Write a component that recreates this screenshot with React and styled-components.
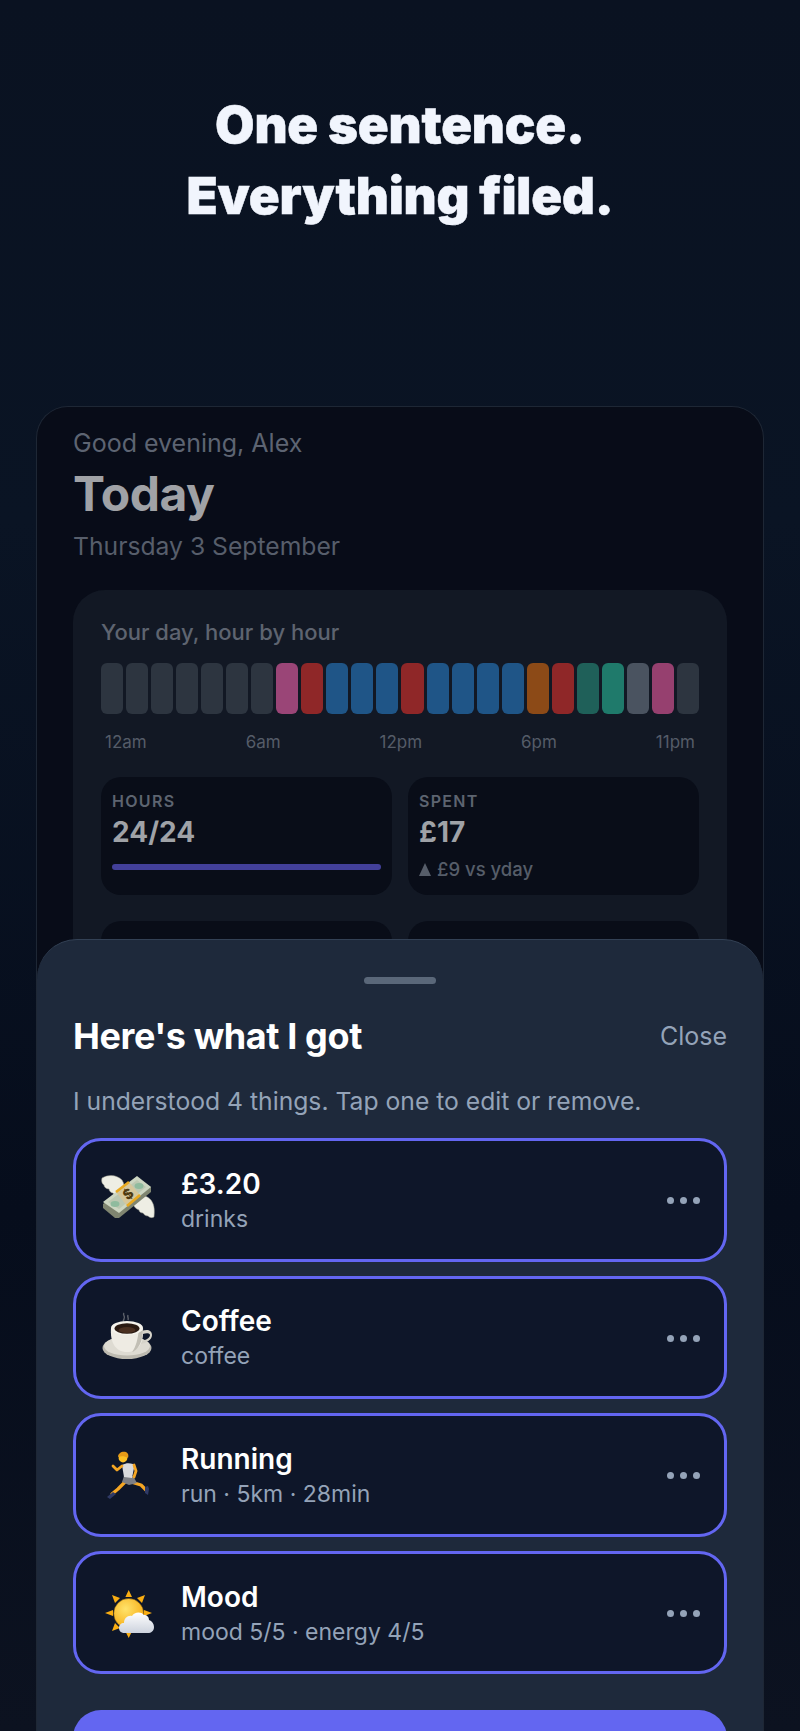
import React from "react";
import styled, { createGlobalStyle } from "styled-components";

const Global = createGlobalStyle`
  html, body { margin: 0; padding: 0; background: #070d1b; }
  * { box-sizing: border-box; }
  body { font-family: Inter, "Liberation Sans", sans-serif; }
`;

const HOURS = [
  "#2d3540", "#2d3540", "#2d3540", "#2d3540", "#2d3540", "#2d3540", "#2d3540",
  "#9a4577", "#8f2728", "#1f5587", "#1f5587", "#1f5587", "#8f2728", "#1f5587",
  "#1f5587", "#1f5587", "#1f5587", "#8c4a17", "#8f2728", "#1f6059", "#1f7a6b",
  "#4a5360", "#96406f", "#2d3540",
];

const HOUR_LABELS = ["12am", "6am", "12pm", "6pm", "11pm"];

function MoneyWings() {
  return (
    <svg width="54" height="54" viewBox="0 0 54 54">
      {/* wings */}
      <path d="M1 5c7-4 15-3 20 2 2 3 3 8 3 14l-6 4c-3-1-5-3-6-5-2 0-4-2-4-4-3 0-5-2-5-4-2-1-3-4-2-7z" fill="#eeeee4" stroke="#9d9d8e" strokeWidth=".5" />
      <path d="M53 44c1-8 0-14-4-18-3-3-9-5-14-4l-4 7c1 4 4 7 7 8 0 2 2 3 4 3 1 2 3 3 5 3 2 2 4 2 6 1z" fill="#eeeee4" stroke="#9d9d8e" strokeWidth=".5" />
      {/* bundle of notes */}
      <path d="M2 31 36 5l14 9 0 5-32 26-4 0-12-10z" fill="#7f8570" />
      <path d="M2 29 36 3l14 11-32 26z" fill="#cdd6c2" />
      <path d="m7 29 29-22 9 7-27 22z" fill="#bcc8b2" />
      <ellipse cx="38" cy="13" rx="4.500" ry="3" fill="#8fbb9e" />
      <ellipse cx="14" cy="31" rx="4.500" ry="3" fill="#8fbb9e" />
      {/* paper band */}
      <path d="m15 19 13-10 11 13-13 11z" fill="#d6c79c" />
      <path d="m15 19 13-10M26 33l13-11" stroke="#e8a91f" strokeWidth="2.600" fill="none" />
      <text x="27" y="26" fontSize="14" fontWeight="800" fill="#4f3a10" textAnchor="middle" transform="rotate(-38 27 21)">$</text>
    </svg>
  );
}

function CoffeeCup() {
  return (
    <svg width="54" height="54" viewBox="0 0 54 54">
      <path d="M23 3c-2 2 2 3 0 6s1 3 0 5M27 5c-1 2 1 3 0 5" stroke="#5f636c" strokeWidth="1.400" fill="none" />
      <ellipse cx="26" cy="38" rx="24.500" ry="11" fill="#bdbab0" />
      <ellipse cx="26" cy="36" rx="23" ry="9.500" fill="#dedbd2" />
      <path d="M41 21c5-2 10-1 10 4 0 5-6 8-11 9l1-3c4-1 8-3 8-6 0-2-4-2-7-1z" fill="#d6d3c9" />
      <path d="M10 18c-1 14 4 24 16 24s17-10 16-24z" fill="#eeebe3" />
      <path d="M31 42c6-2 11-10 11-24h-4c-1 11-3 19-7 24z" fill="#c2bfb5" />
      <ellipse cx="26" cy="18" rx="16" ry="7" fill="#f5f3ec" />
      <ellipse cx="26" cy="18.500" rx="12.500" ry="5.200" fill="#2a1a12" />
      <ellipse cx="26" cy="20" rx="8.500" ry="3" fill="#4a2f20" />
    </svg>
  );
}

function Runner() {
  return (
    <svg width="54" height="54" viewBox="0 0 54 54">
      {/* legs */}
      <path d="M24 34 17 41 11 46" stroke="#f5a623" strokeWidth="3.200" fill="none" strokeLinecap="round" strokeLinejoin="round" />
      <path d="M30 34 40 37 45 42" stroke="#f5a623" strokeWidth="3.200" fill="none" strokeLinecap="round" strokeLinejoin="round" />
      <path d="M6 49 12 44l3 2-6 5z" fill="#2f3a66" />
      <path d="m44 39 3-1 1 3-1 6-3-2z" fill="#2f3a66" />
      {/* shorts */}
      <path d="M23 28 32 28l4 7-8 2-7-3z" fill="#7d7f85" />
      {/* shirt */}
      <path d="M21 17c4-2 7-2 11-1l1 4-2 10-8-1-1-6z" fill="#d9dadd" />
      {/* arms */}
      <path d="M21 18 16 22 12 18" stroke="#f5a623" strokeWidth="2.800" fill="none" strokeLinecap="round" strokeLinejoin="round" />
      <path d="M33 17 35 23 33 29" stroke="#f5a623" strokeWidth="2.800" fill="none" strokeLinecap="round" strokeLinejoin="round" />
      <circle cx="22" cy="10" r="4.400" fill="#fbbf24" />
      <path d="M17 9c0-4 4-6 8-5 2 1 3 3 2 6-3-2-7-2-10-1z" fill="#e69a17" />
    </svg>
  );
}

function SunCloud() {
  return (
    <svg width="54" height="54" viewBox="0 0 54 54">
      <defs>
        <radialGradient id="sun" cx=".4" cy=".35" r=".75">
          <stop offset="0" stopColor="#ffe36b" />
          <stop offset="1" stopColor="#f7a70c" />
        </radialGradient>
        <linearGradient id="cloud" x1="0" y1="0" x2="0" y2="1">
          <stop offset="0" stopColor="#ffffff" />
          <stop offset="1" stopColor="#ccd2dd" />
        </linearGradient>
      </defs>
      <path d="M27.700 4 31 11h-6.600zM27.700 52 24.700 46h6zM4 27l8-3v6zM51 27l-8-3v6zM11 9l8 3-5 5zM44 9l-8 3 5 5zM11 45l3-8 5 5z" fill="#f9ad12" />
      <circle cx="27.700" cy="27.500" r="15" fill="url(#sun)" stroke="#6d4a06" strokeWidth=".5" />
      <path d="M24 47c-4 0-6-2-6-5s2-5 5-5c0-5 4-8 8-7 2-4 9-5 12-1 3 0 5 2 5 5 3 1 5 4 5 7 0 4-3 6-6 6z" fill="url(#cloud)" />
    </svg>
  );
}

const ITEMS = [
  { icon: <MoneyWings />, title: "£3.20", detail: "drinks" },
  { icon: <CoffeeCup />, title: "Coffee", detail: "coffee" },
  { icon: <Runner />, title: "Running", detail: "run · 5km · 28min" },
  { icon: <SunCloud />, title: "Mood", detail: "mood 5/5 · energy 4/5" },
];

export default function App() {
  return (
    <>
      <Global />
      <Page>
        <Headline>
          One sentence.
          <br />
          Everything filed.
        </Headline>
        <Card>
          <Greeting>Good evening, Alex</Greeting>
          <Today>Today</Today>
          <DateLine>Thursday 3 September</DateLine>
          <Panel>
            <PanelTitle>Your day, hour by hour</PanelTitle>
            <Bars>
              {HOURS.map((color, i) => (
                <Bar key={i} $color={color} />
              ))}
            </Bars>
            <HourLabels>
              {HOUR_LABELS.map((label) => (
                <span key={label}>{label}</span>
              ))}
            </HourLabels>
            <Stats>
              <Stat>
                <StatLabel>HOURS</StatLabel>
                <StatValue>24/24</StatValue>
                <Progress />
              </Stat>
              <Stat>
                <StatLabel>SPENT</StatLabel>
                <StatValue>£17</StatValue>
                <StatNote>
                  <Triangle />
                  £9 vs yday
                </StatNote>
              </Stat>
              <Stat />
              <Stat />
            </Stats>
          </Panel>
          <Sheet>
            <Handle />
            <SheetHead>
              <SheetTitle>Here's what I got</SheetTitle>
              <Close>Close</Close>
            </SheetHead>
            <SheetText>I understood 4 things. Tap one to edit or remove.</SheetText>
            <List>
              {ITEMS.map((item) => (
                <Item key={item.title}>
                  <Emoji>{item.icon}</Emoji>
                  <ItemBody>
                    <ItemTitle>{item.title}</ItemTitle>
                    <ItemDetail>{item.detail}</ItemDetail>
                  </ItemBody>
                  <Dots>
                    <i />
                    <i />
                    <i />
                  </Dots>
                </Item>
              ))}
            </List>
            <Confirm />
          </Sheet>
        </Card>
      </Page>
    </>
  );
}

const Page = styled.div`
  width: 800px;
  height: 1731px;
  overflow: hidden;
  display: flex;
  flex-direction: column;
  padding: 0 36px;
  background: linear-gradient(180deg, #0a1221 0%, #0a1424 30%, #060d1c 70%, #0c1220 100%);
`;

const Headline = styled.h1`
  margin: 0;
  height: 406px;
  padding-top: 89px;
  text-align: center;
  font-size: 51px;
  line-height: 71px;
  font-weight: 900;
  letter-spacing: -0.2px;
  color: #f1f5fd;
  -webkit-text-stroke: 0.5px #f1f5fd;
`;

const Card = styled.div`
  position: relative;
  flex: 1;
  overflow: hidden;
  padding: 21px 36px 0;
  border: 1px solid #1e2735;
  border-bottom: none;
  border-radius: 32px 32px 0 0;
  background: #080c18;
`;

const Greeting = styled.div`
  font-size: 25px;
  line-height: 30px;
  color: #5d6472;
`;

const Today = styled.div`
  margin-top: 7px;
  font-size: 48px;
  line-height: 58px;
  font-weight: 700;
  letter-spacing: -0.5px;
  color: #a0a2a6;
`;

const DateLine = styled.div`
  margin-top: 8px;
  font-size: 24.7px;
  line-height: 30px;
  color: #575e6b;
`;

const Panel = styled.div`
  margin-top: 29px;
  padding: 29px 28px 0;
  height: 420px;
  border-radius: 32px;
  background: #121824;
`;

const PanelTitle = styled.div`
  font-size: 22px;
  line-height: 26px;
  font-weight: 500;
  color: #5e6470;
`;

const Bars = styled.div`
  display: grid;
  grid-template-columns: repeat(24, 1fr);
  gap: 3px;
  margin-top: 18px;
`;

const Bar = styled.div`
  height: 51px;
  border-radius: 6px;
  background: ${(props) => props.$color};
`;

const HourLabels = styled.div`
  display: flex;
  justify-content: space-between;
  margin-top: 18px;
  padding: 0 4px;
  font-size: 17px;
  line-height: 20px;
  color: #555c68;
`;

const Stats = styled.div`
  display: grid;
  grid-template-columns: 1fr 1fr;
  gap: 26px 16px;
  margin-top: 25px;
`;

const Stat = styled.div`
  height: 118px;
  padding: 14px 11px 0;
  border-radius: 20px;
  background: #090d18;
`;

const StatLabel = styled.div`
  font-size: 16px;
  line-height: 20px;
  font-weight: 600;
  letter-spacing: 1.3px;
  color: #5d6470;
`;

const StatValue = styled.div`
  margin-top: 2px;
  font-size: 28px;
  line-height: 38px;
  font-weight: 700;
  color: #9fa2a7;
`;

const Progress = styled.div`
  height: 6px;
  margin-top: 13px;
  border-radius: 3px;
  background: #43409a;
`;

const StatNote = styled.div`
  display: flex;
  align-items: center;
  gap: 6px;
  margin-top: 7px;
  font-size: 18.5px;
  line-height: 22px;
  font-weight: 500;
  color: #565d69;
`;

const Triangle = styled.span`
  width: 0;
  height: 0;
  border-left: 6px solid transparent;
  border-right: 6px solid transparent;
  border-bottom: 13px solid #565d69;
`;

const Sheet = styled.div`
  position: absolute;
  left: 0;
  right: 0;
  bottom: 0;
  height: 792px;
  padding: 0 36px;
  border-top: 1px solid #334155;
  border-radius: 40px 40px 0 0;
  background: #1e293b;
`;

const Handle = styled.div`
  width: 72px;
  height: 7px;
  margin: 37px auto 0;
  border-radius: 4px;
  background: #5a6779;
`;

const SheetHead = styled.div`
  display: flex;
  align-items: center;
  justify-content: space-between;
  margin-top: 30px;
`;

const SheetTitle = styled.div`
  font-size: 36px;
  line-height: 44px;
  font-weight: 700;
  letter-spacing: -0.4px;
  color: #ffffff;
`;

const Close = styled.div`
  font-size: 25px;
  line-height: 32px;
  color: #94a3b8;
`;

const SheetText = styled.div`
  margin-top: 27px;
  font-size: 24.7px;
  line-height: 32px;
  color: #94a3b8;
`;

const List = styled.div`
  display: flex;
  flex-direction: column;
  gap: 14px;
  margin-top: 21px;
`;

const Item = styled.div`
  display: flex;
  align-items: center;
  height: 123.6px;
  padding: 2px 24px 0 25px;
  border: 3px solid #6366f1;
  border-radius: 28px;
  background: #0e1629;
`;

const Emoji = styled.div`
  display: flex;
  width: 54px;
  flex: none;
  margin-top: -2px;
`;

const ItemBody = styled.div`
  flex: 1;
  margin-left: 26px;
`;

const ItemTitle = styled.div`
  font-size: 28px;
  line-height: 36px;
  font-weight: 600;
  color: #ffffff;
`;

const ItemDetail = styled.div`
  font-size: 23px;
  line-height: 34px;
  color: #94a3b8;
`;

const Dots = styled.div`
  display: flex;
  gap: 6px;
  i {
    width: 7px;
    height: 7px;
    border-radius: 50%;
    background: #94a3b8;
  }
`;

const Confirm = styled.div`
  height: 80px;
  margin-top: 36px;
  border-radius: 28px;
  background: #6366f1;
`;
